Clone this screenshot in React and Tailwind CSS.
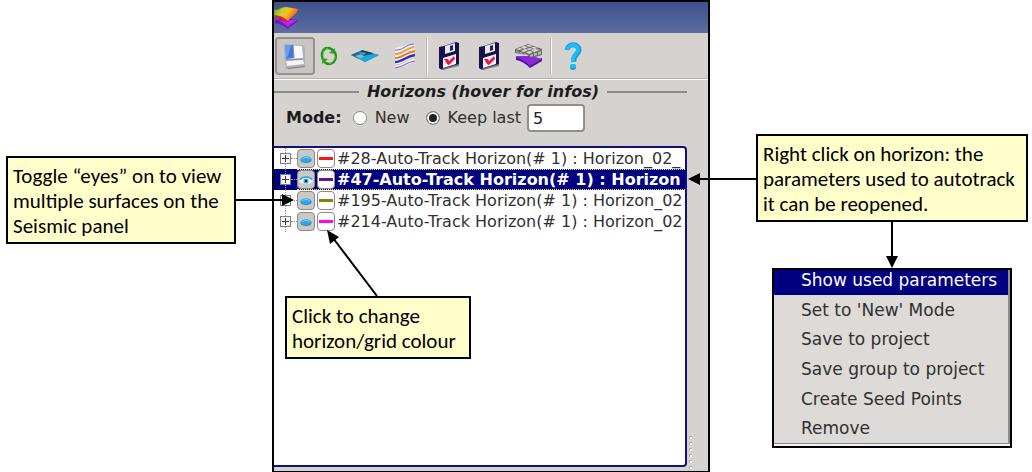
import React, { useState } from "react";

const HORIZONS = [
  { id: 28, label: "#28-Auto-Track Horizon(# 1) : Horizon_02_", swatch: "bg-[#ff1414]" },
  { id: 47, label: "#47-Auto-Track Horizon(# 1) : Horizon", swatch: "bg-[#5c1a8c]" },
  { id: 195, label: "#195-Auto-Track Horizon(# 1) : Horizon_02", swatch: "bg-[#84840a]" },
  { id: 214, label: "#214-Auto-Track Horizon(# 1) : Horizon_02", swatch: "bg-[#ff00ff]" },
];

const MENU_ITEMS = [
  "Set to 'New' Mode",
  "Save to project",
  "Save group to project",
  "Create Seed Points",
  "Remove",
];

function AppLogo() {
  return (
    <svg viewBox="0 0 26 24" className="h-6 w-[26px]" aria-hidden="true">
      <defs>
        <linearGradient id="logoWarm" x1="0" y1="0.2" x2="1" y2="0.6">
          <stop offset="0" stopColor="#5fae20" />
          <stop offset="0.3" stopColor="#c8cc28" />
          <stop offset="0.55" stopColor="#f4c028" />
          <stop offset="0.75" stopColor="#f88a1c" />
          <stop offset="1" stopColor="#f04a28" />
        </linearGradient>
      </defs>
      <path d="M1 14 C5 14 8 13 12 12 L23 14 C23 18 18 18 14 23 C11 20 7 18 1 17 Z" fill="#7a10c4" />
      <path d="M2 15 C7 15 10 17 14 21 C17 17 20 17 23 14 L14 14 Z" fill="#b428f4" />
      <path d="M0 7 L12 10 L15 14 L13 17 C9 14 5 12 0 11 Z" fill="#e0203a" />
      <path d="M0 4 C6 4 7 1 12 1 L24 3 C23 9 17 10 14 15 C10 11 5 9 0 9 Z" fill="url(#logoWarm)" />
    </svg>
  );
}

function PanelIcon() {
  return (
    <svg viewBox="0 0 24 28" className="h-7 w-6" aria-hidden="true">
      <path d="M3 24 L21 23 L22 25 L6 27 L3 26 Z" fill="#808288" />
      <path d="M1 2 L20 3 L22 6 L22 24 L4 26 L2 23 Z" fill="#b0b2b8" />
      <path d="M2 3 L19 4 L20 16 L3 17 Z" fill="#f7f8fb" />
      <path d="M3 19 L20 18 L21 22 L4 24 Z" fill="#f4f5f8" />
      <path d="M2 3 L10 3 L11 16 L3 17 Z" fill="#3f78dc" />
      <path d="M2 3 L8 3 L5 14 L3 17 Z" fill="#6a9cf0" />
      <path d="M10 3 L11 16 M3 18 L20 17" stroke="#8c8e96" strokeWidth="1" fill="none" />
    </svg>
  );
}

function RefreshIcon() {
  return (
    <svg viewBox="0 0 18 20" className="h-5 w-[18px]" aria-hidden="true">
      <path d="M4 15 C0 10 2 2 8 2 C10 2 12 3 13 5" stroke="#239417" strokeWidth="2.4" fill="none" />
      <path d="M15 2 L15 8 L9 7 Z" fill="#2ba81c" />
      <path d="M14 5 C18 10 15 18 9 18 C7 18 5 17 4 15" stroke="#239417" strokeWidth="2.4" fill="none" />
      <path d="M2 18 L2 12 L8 13 Z" fill="#2ba81c" />
      <path d="M3 10 C3 6 5 3 8 2 M15 10 C15 14 12 17 9 18" stroke="#5fd048" strokeWidth="1" fill="none" />
    </svg>
  );
}

function SurfaceIcon() {
  return (
    <svg viewBox="0 0 28 14" className="h-3.5 w-7" aria-hidden="true">
      <path d="M0 6 L11 1 L28 6 L14 13 Z" fill="#1a86b8" />
      <path d="M0 6 L7 3 L14 7 L8 10 Z" fill="#2c698c" />
      <path d="M4 7 L10 5 L14 8 L9 10 Z" fill="#6cb8d8" />
      <path d="M11 1 L22 4 L18 7 L12 6 L9 3 Z" fill="#27485c" />
      <path d="M16 6 C21 5 25 5 28 6 L14 13 L9 10 C14 10 13 7 16 6 Z" fill="#14a8ea" />
      <path d="M10 3 L15 4 L13 6 L9 5 Z" fill="#3a9cc8" />
    </svg>
  );
}

function LayersIcon() {
  return (
    <svg viewBox="0 0 22 28" className="h-7 w-[22px]" aria-hidden="true">
      <path d="M1 6 L20 1 L21 20 L1 27 Z" fill="#f1eff3" />
      <g fill="none" strokeWidth="2">
        <path d="M1 8 C9 9 12 2 20 2" stroke="#5a6cd8" strokeWidth="1" />
        <path d="M1 12 C9 12 12 6 20 5" stroke="#f0a030" />
        <path d="M1 16 C9 16 12 10 21 9" stroke="#f07814" />
        <path d="M1 20 C9 20 12 14 21 13" stroke="#2430d0" strokeWidth="2.4" />
        <path d="M1 23 C9 23 13 17 21 16" stroke="#f4b868" strokeWidth="1" />
        <path d="M1 26 C9 25 13 20 21 19" stroke="#5460d8" strokeWidth="1" />
      </g>
    </svg>
  );
}

function SaveIcon() {
  return (
    <svg viewBox="0 0 20 28" className="h-7 w-5" aria-hidden="true">
      <path d="M0 5 L5 4 L17 0 L20 1 L20 23 L3 28 L0 26 Z" fill="#17124a" />
      <path d="M2 27 L20 22 L20 24 L3 28 Z" fill="#7c7a88" />
      <path d="M6 4 L16 1 L16 9 L6 12 Z" fill="#e8e9ef" />
      <path d="M11 4 L14 3 L14 8 L11 9 Z" fill="#24205c" />
      <path d="M4 16 L17 12 L17 22 L4 26 Z" fill="#f7f4f8" />
      <path d="M5 17 L9 17 L10 19 L15 14 L16 17 L10 23 L8 22 Z" fill="#f01448" />
    </svg>
  );
}

function CubeIcon() {
  return (
    <svg viewBox="0 0 30 26" className="h-[26px] w-[30px]" aria-hidden="true">
      <path d="M2 14 C8 14 12 17 17 20 L28 15 L28 18 L16 25 C12 21 8 18 2 17 Z" fill="#561098" />
      <path d="M2 13 L18 13 L28 16 L16 23 C12 19 8 16 2 14 Z" fill="#8c28dc" />
      <path d="M1 6 L14 1 L28 6 L28 12 L18 15 L13 12 L1 10 Z" fill="#6c6c66" />
      <g fill="#dcdcd6">
        <path d="M2 6 L6 5 L9 6 L5 7 Z" />
        <path d="M7 4 L10 3 L14 4 L10 6 Z" />
        <path d="M12 2 L15 2 L19 3 L15 4 Z" />
        <path d="M7 8 L11 6 L14 7 L10 9 Z" />
        <path d="M12 6 L16 5 L19 6 L15 7 Z" />
        <path d="M17 4 L20 4 L24 5 L20 6 Z" />
        <path d="M12 9 L16 8 L19 9 L15 11 Z" />
        <path d="M17 7 L21 6 L26 7 L20 9 Z" />
      </g>
      <g fill="#b8b8b2">
        <path d="M2 8 L5 9 L5 10 L2 9 Z M6 9 L9 10 L9 11 L6 10 Z M10 10 L14 12 L14 13 L10 11 Z" />
        <path d="M16 12 L19 11 L19 13 L16 14 Z M20 10 L23 10 L23 12 L20 13 Z M24 9 L27 8 L27 11 L24 12 Z" />
      </g>
    </svg>
  );
}

function HelpIcon() {
  return (
    <svg viewBox="0 0 18 28" className="h-7 w-[18px]" aria-hidden="true">
      <path d="M3 8 C4 1 15 1 15 8 C15 13 9 12 10 20" stroke="#2a90d0" strokeWidth="5" fill="none" />
      <path d="M3 8 C4 2 14 1 14 8 C14 12 8 12 9 20" stroke="#16c0fa" strokeWidth="4" fill="none" />
      <ellipse cx="9" cy="25" rx="3" ry="3" fill="#2a90d0" />
      <ellipse cx="9" cy="24" rx="3" ry="2" fill="#16c0fa" />
    </svg>
  );
}

function EyeIcon({ open }) {
  return open ? (
    <svg viewBox="0 0 14 12" className="h-3 w-3.5 shrink-0" aria-hidden="true">
      <path d="M0 7 C3 3 11 3 14 7 C11 11 3 11 0 7 Z" fill="#fff" />
      <path d="M1 6 C3 2 11 2 13 6" stroke="#2ba4e4" strokeWidth="1.5" fill="none" />
      <circle cx="7" cy="7" r="2.6" fill="#38aee8" />
      <circle cx="7" cy="7" r="1.2" fill="#112233" />
    </svg>
  ) : (
    <svg viewBox="0 0 14 12" className="h-3 w-3.5 shrink-0" aria-hidden="true">
      <path d="M1 7 C2 2 12 2 13 7 C12 10 2 10 1 7 Z" fill="#28a8ee" />
      <path d="M2 8 C4 10 10 10 12 8" stroke="#3a80a8" strokeWidth="1" fill="none" />
      <path d="M3 6 C5 4 9 4 11 6" stroke="#74d0fa" strokeWidth="1" fill="none" />
    </svg>
  );
}

function ToolButton({ label, width, active, children }) {
  return (
    <button
      type="button"
      aria-label={label}
      aria-pressed={active}
      className={`flex h-[38px] shrink-0 items-center justify-center ${width} ${
        active ? "rounded border-2 border-[#94918e] bg-[#c8c5c2]" : ""
      }`}
    >
      {children}
    </button>
  );
}

function Separator() {
  return (
    <div className="flex h-9 w-2 shrink-0 justify-center" role="separator">
      <div className="w-0.5 border-l border-[#b5b2af] bg-white" />
    </div>
  );
}

function Callout({ className = "", children }) {
  return (
    <p
      className={`border-2 border-black bg-[#ffffcc] px-[5px] pt-1.5 pb-[3px] font-[Carlito,Lato,sans-serif] text-[21px] leading-[25px] whitespace-nowrap text-black ${className}`}
    >
      {children}
    </p>
  );
}

function HorizonRow({ horizon, selected, onSelect }) {
  return (
    <li
      role="treeitem"
      aria-selected={selected}
      onClick={onSelect}
      className={`flex h-[21px] items-center overflow-hidden ${
        selected ? "bg-[#000080] font-bold text-white" : "text-[#303030]"
      }`}
    >
      <span className="ml-1.5 flex h-full shrink-0 flex-col items-center">
        <span className="flex-1 border-l border-dotted border-[#909090]" />
        <button
          type="button"
          aria-label={`Expand horizon ${horizon.id}`}
          className="flex size-[11px] shrink-0 items-center justify-center border border-[#808080] bg-[#f4f4f4]"
        >
          <svg viewBox="0 0 7 7" className="size-[7px]" aria-hidden="true">
            <path d="M0 3.5 H7 M3.5 0 V7" stroke="#404040" />
          </svg>
        </button>
        <span className="flex-1 border-l border-dotted border-[#909090]" />
      </span>
      <span className="w-1.5 shrink-0 border-t border-dotted border-[#909090]" />
      <span
        className={`flex h-[21px] min-w-0 flex-1 items-center gap-0.5 ${
          selected ? "border-y border-dotted border-[#e6e67a]" : ""
        }`}
      >
        <button
          type="button"
          aria-label={`Toggle display of horizon ${horizon.id}`}
          className="flex h-[19px] w-[18px] shrink-0 items-center justify-center rounded border border-[#8c8a88] bg-[#cbc8c5]"
        >
          <EyeIcon open={selected} />
        </button>
        <button
          type="button"
          aria-label={`Colour of horizon ${horizon.id}`}
          className="flex h-[19px] w-[18px] shrink-0 items-center justify-center rounded border border-[#8c8a88] bg-white"
        >
          <span className={`h-[3px] w-3.5 ${horizon.swatch}`} />
        </button>
        <span className="min-w-0 flex-1 overflow-hidden whitespace-nowrap">{horizon.label}</span>
      </span>
    </li>
  );
}

function ModeRadio({ id, label, value, mode, onChange }) {
  return (
    <span className="flex items-center gap-2">
      <input
        id={id}
        type="radio"
        name="mode"
        checked={mode === value}
        onChange={() => onChange(value)}
        className="size-3.5 shrink-0 appearance-none rounded-full border border-[#8c8a88] bg-white checked:bg-[#202020] checked:shadow-[inset_0_0_0_2px_white]"
      />
      <label htmlFor={id}>{label}</label>
    </span>
  );
}

function HorizonWindow() {
  const [mode, setMode] = useState("keep");
  const [count, setCount] = useState("5");
  const [selected, setSelected] = useState(47);

  return (
    <section className="flex flex-col border-2 border-black bg-[#d6d2cf] text-[16px] leading-5 text-[#303030]">
      <header className="flex h-[31px] items-start bg-linear-to-b from-[#3c528c] to-[#5f6c9f] pt-1">
        <AppLogo />
      </header>

      <div className="flex h-[46px] items-center border-b border-[#b3b0ad] pl-px" role="toolbar" aria-label="Horizon tools">
        <ToolButton label="Display panel" width="w-10" active>
          <PanelIcon />
        </ToolButton>
        <ToolButton label="Refresh" width="w-7">
          <RefreshIcon />
        </ToolButton>
        <ToolButton label="Surface" width="w-11">
          <SurfaceIcon />
        </ToolButton>
        <ToolButton label="Layers" width="w-9">
          <LayersIcon />
        </ToolButton>
        <Separator />
        <ToolButton label="Save" width="w-9">
          <SaveIcon />
        </ToolButton>
        <ToolButton label="Save as" width="w-11">
          <SaveIcon />
        </ToolButton>
        <ToolButton label="Save to volume" width="w-9">
          <CubeIcon />
        </ToolButton>
        <Separator />
        <ToolButton label="Help" width="w-9">
          <HelpIcon />
        </ToolButton>
      </div>

      <div className="flex flex-col border-t border-white pr-[21px]">
        <div className="flex items-center gap-2 pt-0.5">
          <span className="h-0.5 flex-1 bg-[#8e8c8a]" />
          <h2 className="font-bold text-[#1c1c1c] italic">Horizons (hover for infos)</h2>
          <span className="h-0.5 w-20 bg-[#8e8c8a]" />
        </div>

        <div className="flex items-center gap-4 pt-0.5 pl-3">
          <div className="flex items-center gap-[11px]" role="radiogroup" aria-label="Mode">
            <strong className="text-[#1c1c1c]">Mode:</strong>
            <ModeRadio id="mode-new" label="New" value="new" mode={mode} onChange={setMode} />
          </div>
          <div className="flex items-center gap-1.5">
            <ModeRadio id="mode-keep" label="Keep last" value="keep" mode={mode} onChange={setMode} />
            <input
              type="text"
              aria-label="Number of horizons to keep"
              value={count}
              onChange={(e) => setCount(e.target.value)}
              className="h-7 w-[58px] rounded border-2 border-[#918f8d] bg-white px-1 text-[#202020]"
            />
          </div>
        </div>
      </div>

      <div className="mt-3.5 flex flex-1 items-stretch">
        <div className="mb-1 min-w-0 flex-1 rounded-r-sm border-2 border-l-0 border-[#10107c] bg-white pb-[106px]">
          <ul role="tree" aria-label="Horizons">
            {HORIZONS.map((h) => (
              <HorizonRow
                key={h.id}
                horizon={h}
                selected={selected === h.id}
                onSelect={() => setSelected(h.id)}
              />
            ))}
          </ul>
          <div className="relative mt-16 ml-[11px] w-fit">
            <Callout className="w-[186px]">
              Click to change
              <br />
              horizon/grid colour
            </Callout>
            <svg viewBox="0 0 60 66" className="absolute bottom-full left-10 h-[66px] w-[60px]" aria-hidden="true">
              <path d="M52 66 L8 8" stroke="#000" strokeWidth="2" />
              <path d="M2 0 L14 7 L5 14 Z" fill="#000" />
            </svg>
          </div>
        </div>
        <div className="flex w-[21px] shrink-0 flex-col justify-end gap-[3px] pb-0.5 pl-0.5" aria-hidden="true">
          {[0, 1, 2, 3, 4, 5].map((n) => (
            <span key={n} className="size-[3px] border-t border-l border-[#b0adaa] bg-white" />
          ))}
        </div>
      </div>
    </section>
  );
}

function ContextMenu() {
  return (
    <div className="w-60 border-2 border-black bg-[#f4f3f2] text-[17px] leading-5 text-[#303030]">
      <div role="menu" className="mb-0.5 border-r-2 border-b border-[#8e8c8a] bg-[#dddad8]">
        <button type="button" role="menuitem" className="flex h-[25px] w-full items-start bg-[#000080] pl-[27px] text-white">
          Show used parameters
        </button>
        <div className="grid h-[148px] grid-rows-5">
          {MENU_ITEMS.map((item) => (
            <button key={item} type="button" role="menuitem" className="flex items-center pl-[27px]">
              {item}
            </button>
          ))}
        </div>
      </div>
    </div>
  );
}

export default function App() {
  return (
    <main className="grid grid-cols-[minmax(0,272fr)_minmax(0,438fr)_minmax(0,322fr)] items-start bg-white font-['DejaVu_Sans',sans-serif]">
      <div className="flex items-center pt-[156px] pl-1.5">
        <Callout className="flex-1">
          Toggle “eyes” on to view
          <br />
          multiple surfaces on the
          <br />
          Seismic panel
        </Callout>
        <div className="relative z-10 h-3.5 w-9 shrink-0">
          <svg viewBox="0 0 58 14" className="absolute top-0 left-0 h-3.5 w-[58px]" aria-hidden="true">
            <path d="M0 7 H48" stroke="#000" strokeWidth="2" />
            <path d="M46 1 L58 7 L46 13 Z" fill="#000" />
          </svg>
        </div>
      </div>

      <HorizonWindow />

      <div className="flex items-start pt-[134px] pr-1">
        <div className="relative z-10 mt-[38px] h-3.5 w-[46px] shrink-0">
          <svg viewBox="0 0 68 14" className="absolute top-0 right-0 h-3.5 w-[68px]" aria-hidden="true">
            <path d="M68 7 H10" stroke="#000" strokeWidth="2" />
            <path d="M12 1 L0 7 L12 13 Z" fill="#000" />
          </svg>
        </div>
        <div className="flex min-w-0 flex-1 flex-col items-center">
          <Callout className="w-full">
            Right click on horizon: the
            <br />
            parameters used to autotrack
            <br />
            it can be reopened.
          </Callout>
          <svg viewBox="0 0 14 46" className="h-[46px] w-3.5" aria-hidden="true">
            <path d="M7 0 V36" stroke="#000" strokeWidth="2" />
            <path d="M1 34 H13 L7 46 Z" fill="#000" />
          </svg>
          <ContextMenu />
        </div>
      </div>
    </main>
  );
}
